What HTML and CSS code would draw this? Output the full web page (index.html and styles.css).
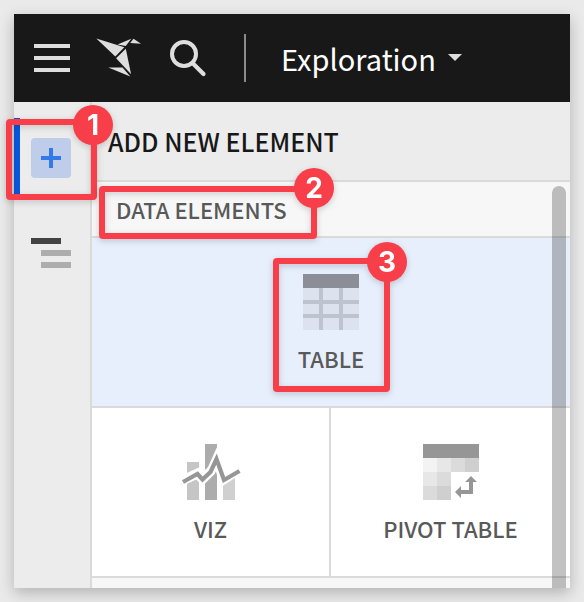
FILE: index.html
```html
<!DOCTYPE html>
<html lang="en">
<head>
<meta charset="utf-8">
<title>Exploration</title>
<link rel="stylesheet" href="styles.css">
</head>
<body>
<div class="window">
  <header class="topbar">
    <svg class="menu" width="36" height="28" viewBox="0 0 36 28"><path d="M0 0h36v4H0zM0 12h36v4H0zM0 24h36v4H0z" fill="#dedede"/></svg>
    <svg class="bird" width="46" height="40" viewBox="0 0 46 40" fill="#dedede">
      <path d="M.3.4 28.3 9.2 19.300 18.500z"/>
      <path d="M21.500 6.500 35.300.7 29.700 7.900z"/>
      <path d="M37.500.8 45 5.700 34.200 5.100z"/>
      <path d="M29.800 10.800 35.100 36.300 20.100 20.200z"/>
      <path d="M12.300 29.400H26.500L34.300 38.400z"/>
    </svg>
    <svg class="search" width="38" height="38" viewBox="0 0 38 38" fill="none" stroke="#dedede" stroke-width="4"><circle cx="15" cy="15" r="12"/><path d="M24 24.500 34.500 35" stroke-linecap="round" stroke-width="4.200"/></svg>
    <span class="rule"></span>
    <span class="page-name">Exploration</span>
    <svg class="caret" width="14" height="8" viewBox="0 0 14 8"><path d="M0 0h14L7 7z" fill="#dedede"/></svg>
  </header>
  <div class="body">
    <nav class="rail">
      <div class="rail-item active"><svg width="40" height="40" viewBox="0 0 40 40"><rect width="40" height="40" rx="4" fill="#bfcdeb"/><path d="M18 10h4v8h8v4h-8v8h-4v-8h-8v-4h8z" fill="#3379e8"/></svg></div>
      <div class="rail-item outline"><svg width="40" height="30" viewBox="0 0 40 30"><path d="M0 0h30v6H0z" fill="#424242"/><path d="M10 12h30v6H10zM10 24h30v6H10z" fill="#adadad"/></svg></div>
    </nav>
    <main class="panel">
      <h1 class="title">ADD NEW ELEMENT</h1>
      <h2 class="section">DATA ELEMENTS</h2>
      <div class="grid">
        <div class="tile wide">
          <svg width="56" height="56" viewBox="0 0 56 56"><path d="M0 14h56v42H0z" fill="#dce2ee"/><path d="M16 14h4v42h-4zM36 14h4v42h-4zM0 26h56v4H0zM0 40h56v4H0z" fill="#bdc3cf"/><path d="M0 0h56v14H0z" fill="#8b8e96"/></svg>
          <span class="label">TABLE</span>
        </div>
        <div class="tile viz">
          <svg width="60" height="56" viewBox="0 0 60 56"><path d="M6 18h12v38H6z" fill="#c5c5c5"/><path d="M24 0h12v56H24z" fill="#acacac"/><path d="M42 34h12v22H42z" fill="#d0d0d0"/><path d="M18 0h24V.5L30 28 18 20zM40 0h18v34H42z" fill="none"/><path d="M-2 38 16.500 29.500 21.500 35 29.500 27 36 13 42.500 35.500 60 24" fill="none" stroke="#fff" stroke-width="10"/><path d="M36 0 28 22H36z" fill="#fff"/><path d="M24 0h12v3L27 23l-3 3z" fill="#acacac"/><path d="M2 38 16.500 30 21.500 35.500 29.500 28 35.500 15 43 36 58.500 27" fill="none" stroke="#969696" stroke-width="4.200"/></svg>
          <span class="label">VIZ</span>
        </div>
        <div class="tile pivot">
          <svg width="56" height="56" viewBox="0 0 56 56"><path d="M0 0h56v14H0z" fill="#969696"/><path d="M0 14h14v14H0z" fill="#f3f3f3"/><path d="M14 14h14v14H14zM0 28h14v14H0z" fill="#e7e7e7"/><path d="M28 14h14v14H28zM14 28h14v14H14zM0 42h14v14H0z" fill="#dbdbdb"/><path d="M42 14h14v14H42zM14 42h14v14H14z" fill="#cfcfcf"/><path d="M48 32l6 6h-4v12H38v4l-6-6 6-6v4h8v-8h-4z" fill="#969696"/></svg>
          <span class="label">PIVOT TABLE</span>
        </div>
      </div>
      <div class="scrollbar"></div>
    </main>
  </div>
</div>
<div class="callout one"><b>1</b></div>
<div class="callout two"><b>2</b></div>
<div class="callout three"><b>3</b></div>
</body>
</html>
```
FILE: styles.css
```css
* { box-sizing: border-box; }
body {
  margin: 0;
  padding: 14px;
  height: 602px;
  overflow: hidden;
  background: #eaeaea;
  font-family: "Noto Sans CJK JP", "Noto Sans", sans-serif;
}
svg { display: block; flex: none; overflow: visible; }
.window {
  width: 556px;
  height: 574px;
  display: flex;
  flex-direction: column;
  background: #ececec;
  box-shadow: 0 5px 14px rgba(0, 0, 0, .24);
}
.topbar {
  height: 88px;
  flex: none;
  display: flex;
  align-items: center;
  padding-left: 20px;
  background: #181818;
}
.bird { margin: 0 0 0 26px; }
.search { margin-left: 27px; }
.rule { width: 2px; height: 48px; margin: 0 35px 0 37px; background: #8b8b8b; }
.page-name { width: 153px; font-size: 29px; line-height: 40px; color: #fff; white-space: nowrap; }
.caret { margin-left: 14px; }
.body { flex: 1; display: flex; min-height: 0; }
.rail { width: 78px; flex: none; border-right: 2px solid #dadada; padding-top: 16px; }
.rail-item { height: 80px; padding-left: 17px; display: flex; align-items: center; }
.rail-item.active { height: 80px; padding-left: 11px; border-left: 6px solid #0757df; }
.rail-item.outline { margin-top: 15px; }
.panel { position: relative; flex: 1; display: flex; flex-direction: column; background: #f7f7f7; }
.title, .section { margin: 0; flex: none; font-weight: 500; white-space: nowrap; border-bottom: 2px solid #dadada; }
.title { height: 80px; padding-left: 16px; font-size: 25px; line-height: 78px; color: #181818; background: #ececec; }
.section { height: 56px; padding-left: 24px; font-size: 22px; line-height: 54px; color: #595959; }
.grid { display: grid; grid-template-columns: 239px 239px; grid-template-rows: 170px 170px; }
.tile {
  display: flex;
  flex-direction: column;
  align-items: center;
  padding-top: 36px;
  background: #fff;
  border-bottom: 2px solid #dadada;
}
.tile.wide { grid-column: 1 / 3; background: #e7eefc; }
.viz { border-right: 2px solid #dadada; }
.label { margin-top: 12px; font-size: 22px; line-height: 32px; font-weight: 500; color: #595959; white-space: nowrap; }
.scrollbar {
  position: absolute;
  right: 4px;
  top: 84px;
  bottom: 0;
  width: 14px;
  border-radius: 7px 7px 0 0;
  background: rgba(0, 0, 0, .24);
}
.callout {
  position: absolute;
  border: 6px solid #f83e49;
  border-radius: 4px;
  filter: drop-shadow(0 2px 3px rgba(0, 0, 0, .18));
}
.callout b {
  position: absolute;
  width: 40px;
  height: 40px;
  border-radius: 50%;
  background: #f83e49;
  color: #fff;
  font: 700 28px/40px Inter, sans-serif;
  text-align: center;
}
.one { left: 6px; top: 119px; width: 91px; height: 81px; }
.one b { left: 61px; top: -20px; }
.two { left: 99px; top: 186px; width: 218px; height: 53px; }
.two b { left: 189px; top: -24px; }
.three { left: 273px; top: 258px; width: 117px; height: 134px; }
.three b { left: 88px; top: -22px; }
```
